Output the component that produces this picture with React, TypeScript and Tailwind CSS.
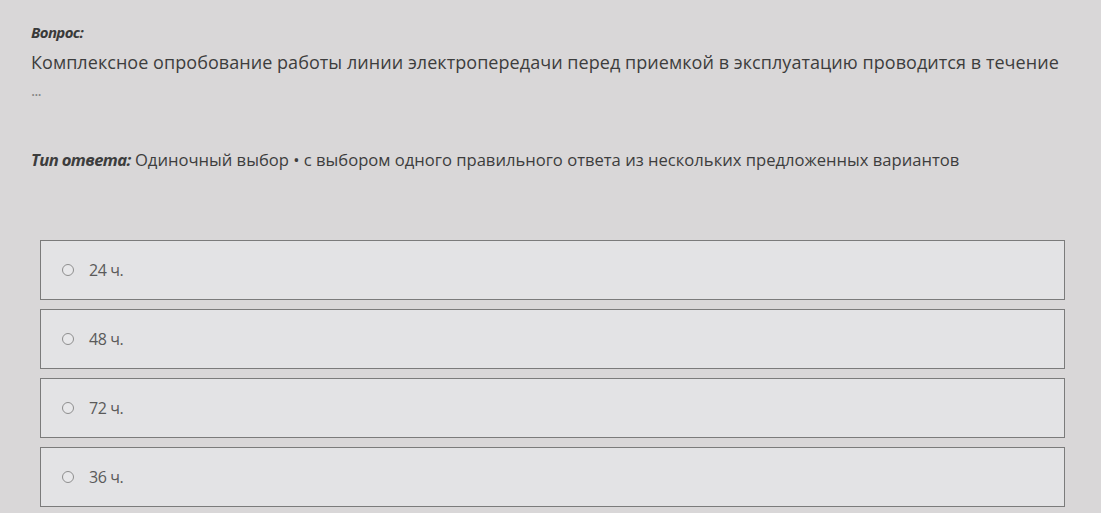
export default function App() {
  const options = ["24 ч.", "48 ч.", "72 ч.", "36 ч."];
  return (
    <div
      className="w-[1101px] h-[513px] overflow-hidden bg-[#d9d7d8] text-[#3b3b3b]"
      style={{ fontFamily: '"Open Sans", "Noto Sans", sans-serif' }}
    >
      <div className="pl-[31px] pt-[22px]">
        <div className="text-[15px] font-bold italic tracking-[-0.6px] text-[#3a3a3a] leading-[20px]">Вопрос:</div>
        <div className="mt-[8px] text-[18px] leading-[24px] text-[#3d3d3d] tracking-[0.05px] whitespace-nowrap">
          Комплексное опробование работы линии электропередачи перед приемкой в эксплуатацию проводится в течение
        </div>
        <div className="mt-[8px] text-[16px] leading-[17px] text-[#858585] tracking-[-1px]">...</div>
        <div className="mt-[50px] text-[16.6px] leading-[22px] text-[#3d3d3d] whitespace-nowrap">
          <span className="font-bold italic tracking-[-0.6px]">Тип ответа:</span> Одиночный выбор • с выбором одного правильного ответа из нескольких предложенных вариантов
        </div>
      </div>
      <div className="mt-[69px] ml-[40px] w-[1025px] flex flex-col gap-[9px]">
        {options.map((o) => (
          <div
            key={o}
            className="h-[60px] border border-[#7b7b7b] bg-[#e3e3e5] flex items-center pl-[21px]"
          >
            <span className="w-[12px] h-[12px] rounded-full border-[1.5px] border-[#8e8e8e] bg-[#e8e8ea]" />
            <span className="ml-[15px] text-[16px] text-[#5a5a5a] tracking-[-0.4px]">{o}</span>
          </div>
        ))}
      </div>
    </div>
  );
}
